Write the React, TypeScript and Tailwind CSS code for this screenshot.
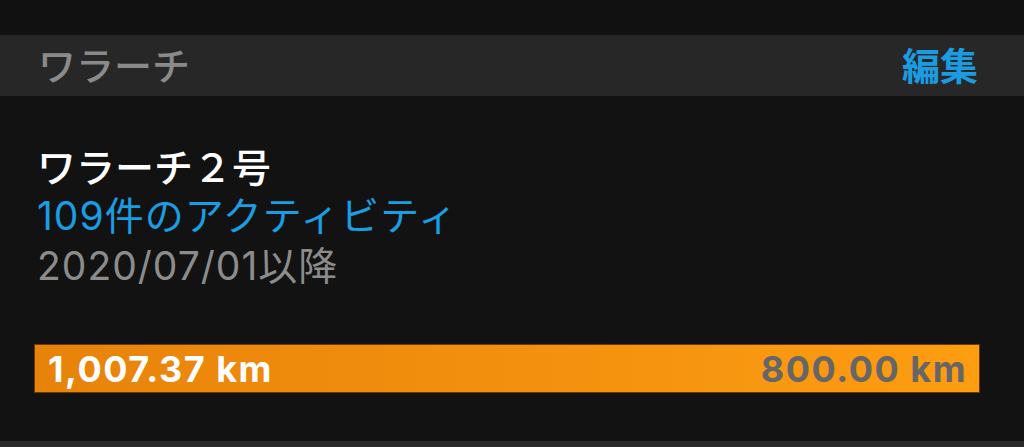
const font = { fontFamily: 'Inter, "Noto Sans CJK JP", sans-serif' };

const App = () => {
  return (
    <div className="w-[1024px] h-[447px] bg-[#121212] flex flex-col overflow-hidden" style={font}>
      <div className="h-[35px] bg-[#111111]" />
      <div className="h-[61px] bg-[#272727] flex items-center justify-between pl-[38px] pr-[46px]">
        <span className="text-[38px] font-medium text-[#8a8a8a] leading-none">ワラーチ</span>
        <span className="text-[38px] font-bold text-[#1b9be0] leading-none">編集</span>
      </div>
      <div className="flex-1 flex flex-col pl-[37px] pt-[48px]">
        <div className="text-[39px] font-medium text-white leading-[48px]">ワラーチ２号</div>
        <div className="text-[39px] text-[#1a9de2] leading-[48px] tracking-[1px]">109件のアクティビティ</div>
        <div className="text-[39px] text-[#8c8c8c] leading-[48px] mt-[2px] tracking-[1px]">2020/07/01以降</div>
        <div className="mt-[54px] -ml-[3px] mr-[44px] h-[49px] border border-[#6b3a00] bg-gradient-to-r from-[#e8830a] to-[#fd9d12] flex items-center justify-between pl-[13px] pr-[12px]">
          <span className="text-[36px] font-bold text-white leading-none tracking-[1.5px]">1,007.37 km</span>
          <span className="text-[36px] font-bold text-[#666666] leading-none tracking-[1.5px]">800.00 km</span>
        </div>
      </div>
      <div className="h-[6px] bg-[#2a2a2a]" />
    </div>
  );
};

export default App;
